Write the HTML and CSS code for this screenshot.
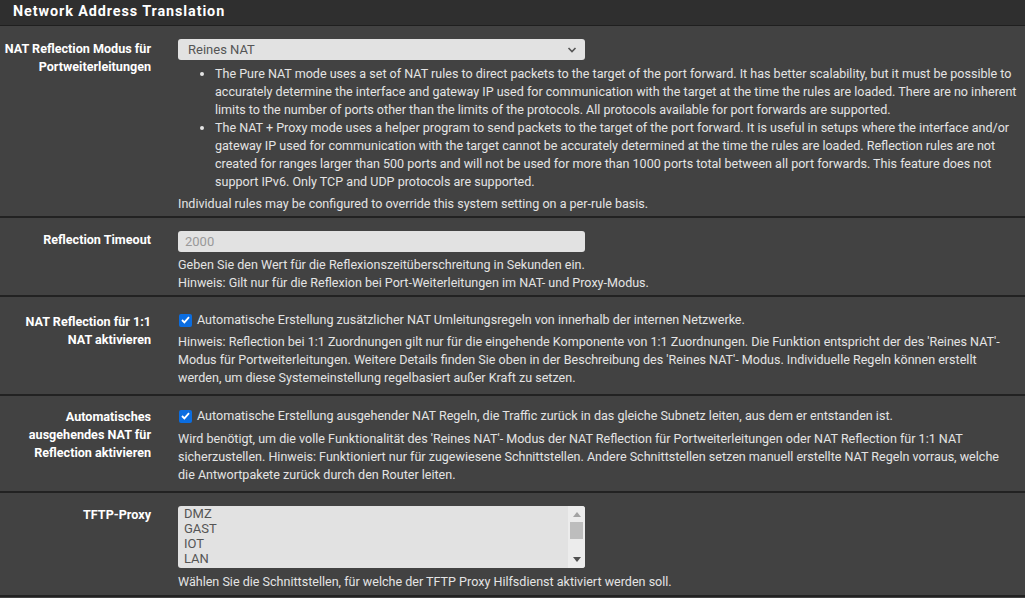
FILE: index.html
```html
<!DOCTYPE html>
<html lang="de">
<head>
    <meta charset="UTF-8">
    <title>Network Address Translation</title>
<link rel="stylesheet" href="styles.css">
</head>
<body>
<div class="panel">
    <div class="panel-head">Network Address Translation</div>

    <div class="row row1">
        <div class="label">NAT Reflection Modus für Portweiterleitungen</div>
        <div class="field">
            <div class="select"><span>Reines NAT</span>
                <svg class="chev" width="10" height="8" viewBox="0 0 10 8"><path d="M1.5 2 L5 5.5 L8.5 2" fill="none" stroke="#555" stroke-width="1.6"/></svg>
            </div>
            <ul class="help-list">
                <li>The Pure NAT mode uses a set of NAT rules to direct packets to the target of the port forward. It has better scalability, but it must be possible to accurately determine the interface and gateway IP used for communication with the target at the time the rules are loaded. There are no inherent limits to the number of ports other than the limits of the protocols. All protocols available for port forwards are supported.</li>
                <li>The NAT + Proxy mode uses a helper program to send packets to the target of the port forward. It is useful in setups where the interface and/or gateway IP used for communication with the target cannot be accurately determined at the time the rules are loaded. Reflection rules are not created for ranges larger than 500 ports and will not be used for more than 1000 ports total between all port forwards. This feature does not support IPv6. Only TCP and UDP protocols are supported.</li>
            </ul>
            <p class="help">Individual rules may be configured to override this system setting on a per-rule basis.</p>
        </div>
    </div>

    <div class="row row2">
        <div class="label">Reflection Timeout</div>
        <div class="field">
            <div class="input">2000</div>
            <p class="help">Geben Sie den Wert für die Reflexionszeitüberschreitung in Sekunden ein.<br>Hinweis: Gilt nur für die Reflexion bei Port-Weiterleitungen im NAT- und Proxy-Modus.</p>
        </div>
    </div>

    <div class="row row3">
        <div class="label">NAT Reflection für 1:1 NAT aktivieren</div>
        <div class="field">
            <label class="check"><span class="box"><svg width="9" height="8" viewBox="0 0 9 8"><path d="M1 4 L3.4 6.4 L8 1.2" fill="none" stroke="#fff" stroke-width="1.8"/></svg></span>Automatische Erstellung zusätzlicher NAT Umleitungsregeln von innerhalb der internen Netzwerke.</label>
            <p class="help">Hinweis: Reflection bei 1:1 Zuordnungen gilt nur für die eingehende Komponente von 1:1 Zuordnungen. Die Funktion entspricht der des 'Reines NAT'-Modus für Portweiterleitungen. Weitere Details finden Sie oben in der Beschreibung des 'Reines NAT'- Modus. Individuelle Regeln können erstellt werden, um diese Systemeinstellung regelbasiert außer Kraft zu setzen.</p>
        </div>
    </div>

    <div class="row row4">
        <div class="label">Automatisches ausgehendes NAT für Reflection aktivieren</div>
        <div class="field">
            <label class="check"><span class="box"><svg width="9" height="8" viewBox="0 0 9 8"><path d="M1 4 L3.4 6.4 L8 1.2" fill="none" stroke="#fff" stroke-width="1.8"/></svg></span>Automatische Erstellung ausgehender NAT Regeln, die Traffic zurück in das gleiche Subnetz leiten, aus dem er entstanden ist.</label>
            <p class="help">Wird benötigt, um die volle Funktionalität des 'Reines NAT'- Modus der NAT Reflection für Portweiterleitungen oder NAT Reflection für 1:1 NAT sicherzustellen. Hinweis: Funktioniert nur für zugewiesene Schnittstellen. Andere Schnittstellen setzen manuell erstellte NAT Regeln vorraus, welche die Antwortpakete zurück durch den Router leiten.</p>
        </div>
    </div>

    <div class="row row5">
        <div class="label">TFTP-Proxy</div>
        <div class="field">
            <div class="listbox">
                <div class="items">
                    <div>DMZ</div>
                    <div>GAST</div>
                    <div>IOT</div>
                    <div>LAN</div>
                </div>
                <div class="scroll">
                    <span class="arrow up"></span>
                    <span class="thumb"></span>
                    <span class="arrow down"></span>
                </div>
            </div>
            <p class="help">Wählen Sie die Schnittstellen, für welche der TFTP Proxy Hilfsdienst aktiviert werden soll.</p>
        </div>
    </div>
</div>
</body>
</html>
```

FILE: styles.css
```css
*{
    margin:0;
    padding:0;
    box-sizing: border-box;
}
body{
    background: #424242;
    font-family: Roboto, "Liberation Sans", sans-serif;
    font-size: 12.55px;
    line-height: 18px;
    color: #e4e4e4;
    width: 1025px;
    height: 598px;
    overflow: hidden;
}
.panel-head{
    height: 26px;
    background: #2f2f2f;
    border-bottom: 1px solid #1f1f1f;
    padding: 3px 13px;
    font-size: 14.4px;
    font-weight: bold;
    letter-spacing: .9px;
    color: #fff;
}
.row{
    display: grid;
    grid-template-columns: 151px 1fr;
    column-gap: 27px;
    border-bottom: 2px solid #222;
}
.label{
    text-align: right;
    font-weight: bold;
    font-size: 12.6px;
    color: #fff;
    padding-left: 4px;
}
.field{
    padding-right: 7px;
}
.row1{ height: 192px; padding-top: 13px; }
.row1 .label{ padding-top: 1px; }
.row2{ height: 79px; padding-top: 13px; }
.row2 .label{ padding-top: 0; }
.row3{ height: 99px; padding-top: 14px; }
.row3 .label{ padding-top: 2px; }
.row4{ height: 97px; padding-top: 11px; }
.row4 .label{ padding-top: 1px; }
.row5{ height: 104px; padding-top: 13px; }
.row5 .label{ padding-top: 0; }

.select, .input{
    width: 407px;
    height: 21px;
    background: #e2e2e2;
    border-radius: 3px;
    color: #555;
    padding: 1px 8px 1px 10px;
    display: flex;
    align-items: center;
    justify-content: space-between;
    font-size: 13px;
}
.input{
    color: #999;
    padding-left: 7px;
}
.help-list{
    list-style: disc;
    padding-left: 37px;
    margin-top: 5px;
}
.help{
    color: #e4e4e4;
}
.row1 .help{ margin-top: 4px; }
.row2 .help{ margin-top: 4px; }
.check{
    display: flex;
    align-items: center;
    gap: 5px;
    margin-bottom: 4px;
}
.row4 .check{
    margin-bottom: 5px;
}
.box{
    width: 13px;
    height: 13px;
    border-radius: 2px;
    background: #0b6de0;
    display: flex;
    align-items: center;
    justify-content: center;
    margin-left: 1px;
}
.listbox{
    width: 407px;
    height: 62px;
    background: #e2e2e2;
    border-radius: 3px;
    display: flex;
    justify-content: space-between;
    color: #555;
    overflow: hidden;
}
.items{
    padding: 0 6px;
    line-height: 15px;
    font-size: 13px;
}
.scroll{
    width: 17px;
    display: flex;
    flex-direction: column;
    align-items: center;
    padding: 3px 0;
    background: #ececec;
}
.arrow{
    width: 0;
    height: 0;
    border-left: 4px solid transparent;
    border-right: 4px solid transparent;
}
.arrow.up{
    border-bottom: 5px solid #a3a3a3;
    margin-top: 3px;
}
.arrow.down{
    border-top: 5px solid #505050;
    margin-top: auto;
    margin-bottom: 3px;
}
.thumb{
    width: 13px;
    height: 17px;
    background: #bdbdbd;
    margin-top: 5px;
}
.row5 .help{ margin-top: 5px; }
```
